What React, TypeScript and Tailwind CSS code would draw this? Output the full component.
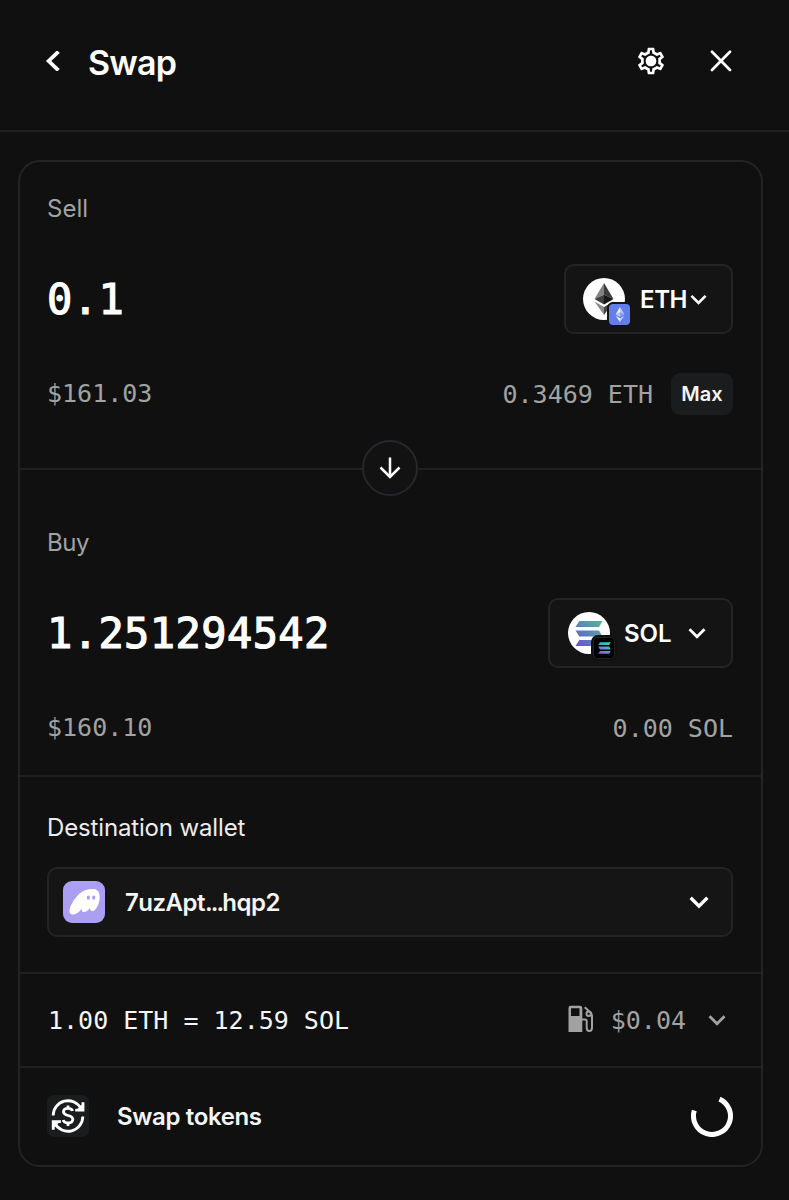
import type { ReactNode } from "react";
import { MdOutlineSettings } from "react-icons/md";

function Chevron({ className = "", dir = "down", weight = 2.8 }: { className?: string; dir?: "down" | "left"; weight?: number }) {
  return (
    <svg className={className} viewBox="0 0 18 18" fill="none" stroke="currentColor" strokeWidth={weight}>
      <path d={dir === "down" ? "M1.5 5.2 9 12.7 16.5 5.2" : "M13 0.5 4.2 9 13 17.5"} />
    </svg>
  );
}

function EthDiamond({ className, mono = false }: { className: string; mono?: boolean }) {
  const c = mono
    ? ["#eef0ff", "#c3cbfa", "#b9c3f8", "#8d9df2", "#eef0ff", "#c3cbfa"]
    : ["#828282", "#3c3c3b", "#3f3f3f", "#151515", "#8a8a8a", "#454545"];
  return (
    <svg className={className} viewBox="0 0 20 32">
      <path d="M10 0 0.5 16 10 11.8Z" fill={c[0]} />
      <path d="M10 0 19.5 16 10 11.8Z" fill={c[1]} />
      <path d="M0.5 16 10 11.8V21.5Z" fill={c[2]} />
      <path d="M19.5 16 10 11.8V21.5Z" fill={c[3]} />
      <path d="M0.5 18.4 10 24V32Z" fill={c[4]} />
      <path d="M19.5 18.4 10 24V32Z" fill={c[5]} />
    </svg>
  );
}

function SolBars({ className, id, from, to }: { className: string; id: string; from: string; to: string }) {
  return (
    <svg className={className} viewBox="0 0 28 25">
      <defs>
        <linearGradient id={id} x1="26" y1="0" x2="3" y2="26" gradientUnits="userSpaceOnUse">
          <stop offset="0" stopColor={from} />
          <stop offset="1" stopColor={to} />
        </linearGradient>
      </defs>
      <g fill={`url(#${id})`}>
        <path d="M4.3 0H27.5L24 6H0.5Z" />
        <path d="M0.5 9.5H24L27.5 15.5H4.3Z" />
        <path d="M4.3 19H27.5L24 25H0.5Z" />
      </g>
    </svg>
  );
}

function Row({ children, className }: { children: ReactNode; className: string }) {
  return <div className={`flex items-center justify-between ${className}`}>{children}</div>;
}

const mono = "font-['DejaVu_Sans_Mono',monospace] whitespace-pre";
const small = "text-[25px] leading-[36px]";
const big = "pt-[2px] text-[42px] leading-[60px] tracking-[0.42px] text-white [-webkit-text-stroke:1.2px_#fff]";

export default function App() {
  return (
    <div className="flex h-[1200px] w-[789px] flex-col bg-[#101010] font-['Inter',sans-serif] text-[#f5f5f5]">
      <header className="flex h-[132px] shrink-0 items-start border-b-2 border-[#202021] pl-[44px] pr-[56px] pt-[38px]">
        <Chevron dir="left" weight={3.4} className="mt-[13px] h-[20px] w-[20px] text-white" />
        <h1 className="ml-[24px] mt-px text-[34px] leading-[48px] font-semibold tracking-[-0.8px] text-white">Swap</h1>
        <div className="relative ml-auto mt-[7px] h-[32px] w-[32px]">
          <MdOutlineSettings className="h-[32px] w-[32px] text-white" />
          <span className="absolute left-[11px] top-[11px] h-[10px] w-[10px] rounded-full bg-white" />
        </div>
        <svg className="ml-[41px] mt-[12px] h-[22px] w-[25px]" viewBox="0 0 25 22" fill="none" stroke="#fff" strokeWidth="2.7" strokeLinecap="round">
          <path d="M4 1.8 22 20M22 1.8 4 20" />
        </svg>
      </header>

      <main className="ml-[18px] mt-[28px] flex h-[1007px] w-[745px] flex-col rounded-[22px] border-2 border-[#242426]">
        <section className="relative h-[308px] border-b-2 border-[#202021] pl-[27px] pr-[28px] pt-[29px]">
          <div className="text-[24px] leading-[36px] text-[#a2a2a2]">Sell</div>
          <Row className="mt-[37px] h-[70px]">
            <span className={`${mono} ${big}`}>0.1</span>
            <div className="flex h-[70px] w-[169px] items-center rounded-[10px] border-2 border-[#242425] bg-[#141414] pl-[17px]">
              <div className="relative flex h-[42px] w-[42px] items-center justify-center rounded-full bg-white">
                <EthDiamond className="h-[32px] w-[20px]" />
                <span className="absolute left-[24px] top-[24px] flex h-[25px] w-[25px] items-center justify-center rounded-[6px] border-2 border-[#141414] bg-[#627eea]">
                  <EthDiamond mono className="h-[15px] w-[10px]" />
                </span>
              </div>
              <span className="ml-[15px] pt-px text-[24px] font-semibold tracking-[-0.4px] text-white">ETH</span>
              <Chevron className="ml-[3px] h-[17px] w-[17px] text-white" />
            </div>
          </Row>
          <Row className="mt-[39px] h-[42px] text-[#a2a2a2]">
            <span className={`${mono} ${small} pb-px`}>$161.03</span>
            <div className="flex items-center">
              <span className={`${mono} ${small} pt-[2px]`}>0.3469 ETH</span>
              <span className="ml-[18px] flex h-[42px] w-[62px] items-center justify-center rounded-[9px] bg-[#1b1c1e] text-[20px] font-semibold text-[#f5f5f5]">Max</span>
            </div>
          </Row>
          <div className="absolute -bottom-[28px] left-[342px] flex h-[56px] w-[56px] items-center justify-center rounded-full border-2 border-[#27262b] bg-[#121213]">
            <svg className="h-[22px] w-[22px]" viewBox="0 0 22 22" fill="none" stroke="#fff" strokeWidth="2.5">
              <path d="M11 0.5V20M1.5 10.5 11 20 20.500 10.5" />
            </svg>
          </div>
        </section>

        <section className="h-[307px] border-b-2 border-[#202021] pl-[27px] pr-[28px] pt-[55px]">
          <div className="text-[24px] leading-[36px] tracking-[-0.5px] text-[#a2a2a2]">Buy</div>
          <Row className="mt-[37px] h-[70px]">
            <span className={`${mono} ${big}`}>1.251294542</span>
            <div className="flex h-[70px] w-[185px] items-center rounded-[10px] border-2 border-[#242425] bg-[#141414] pl-[18px]">
              <div className="relative flex h-[42px] w-[42px] items-center justify-center rounded-full bg-white">
                <SolBars id="sol-token" from="#4fb795" to="#6b50d8" className="h-[25px] w-[28px]" />
                <span className="absolute left-[23px] top-[23px] flex h-[26px] w-[26px] items-center justify-center rounded-[7px] bg-[#111]">
                  <span className="flex h-[22px] w-[22px] items-center justify-center rounded-[4px] border border-[#222] bg-black">
                    <SolBars id="sol-chain" from="#19f0a0" to="#9945ff" className="h-[12px] w-[13px]" />
                  </span>
                </span>
              </div>
              <span className="ml-[14px] pt-px text-[24px] font-semibold text-white">SOL</span>
              <Chevron className="ml-[16px] h-[18px] w-[18px] text-white" />
            </div>
          </Row>
          <Row className="mt-[39px] h-[42px] text-[#a2a2a2]">
            <span className={`${mono} ${small} pb-px`}>$160.10</span>
            <span className={`${mono} ${small} pt-[2px]`}>0.00 SOL</span>
          </Row>
        </section>

        <section className="h-[197px] border-b-2 border-[#202021] pl-[27px] pr-[28px] pt-[33px]">
          <div className="text-[24px] leading-[36px] tracking-[-0.15px] text-[#ececec]">Destination wallet</div>
          <div className="mt-[21px] flex h-[70px] items-center rounded-[10px] border-2 border-[#242425] bg-[#151515] pl-[14px] pr-[22px]">
            <svg className="h-[42px] w-[42px] rounded-[9px] bg-[#ab9ff2]" viewBox="0 0 42 42">
              <path fill="#fff" d="M6.5 31C6 26 11 18 16 13 20 9 26 7.500 31 8 35 8.500 37 12 36.700 17 36.500 23 32.500 30 30 30 28 30.500 27 29 26.800 27 25 29.500 23 31 21 31 19 31.200 18.500 29 18.500 27.500 16.500 31 13 33.500 10 33.500 8 33.500 6.700 32.500 6.500 31Z" />
              <ellipse cx="25.300" cy="16.700" rx="1.600" ry="2.100" fill="#ab9ff2" />
              <ellipse cx="30.700" cy="16.700" rx="1.600" ry="2.100" fill="#ab9ff2" />
            </svg>
            <span className="ml-[20px] pt-px text-[24px] font-semibold tracking-[-0.5px]">
              7uzApt<span className="tracking-[-1.900px]">...</span>hqp2
            </span>
            <Chevron weight={3} className="ml-auto h-[20px] w-[20px] text-white" />
          </div>
        </section>

        <section className="flex h-[94px] items-center border-b-2 border-[#202021] pl-[28px] pr-[28px]">
          <span className={`${mono} ${small} pt-[2px]`}>1.00 ETH = 12.59 SOL</span>
          <svg className="ml-auto h-[28px] w-[26px] -translate-y-px" viewBox="0 0 26 28" fill="none" stroke="#a2a2a2" strokeWidth="2">
            <path fill="#a2a2a2" stroke="none" fillRule="evenodd" d="M2.500 0.700H12Q14.300 0.700 14.300 3V27H0.500V3Q0.500 0.700 2.500 0.700ZM3 3.300V11H11.500V3.300Z" />
            <path d="M16.700 2.300 22.500 7.500Q24 9 24 11V22.500Q24 26 21.300 26 18.700 26 18.700 22.500V16Q18.700 14.500 17 14.500H14" />
            <circle cx="20.700" cy="8.700" r="2.200" />
          </svg>
          <span className={`${mono} ${small} ml-[17px] pt-[2px] text-[#a2a2a2]`}>$0.04</span>
          <Chevron className="ml-[22px] mr-[7px] h-[18px] w-[18px] text-[#a2a2a2]" />
        </section>

        <section className="flex flex-1 items-center pl-[27px] pr-[28px]">
          <svg className="h-[42px] w-[42px] -translate-y-px rounded-[7px] bg-[#1b1c1e]" viewBox="0 0 42 42" fill="none" stroke="#fff" strokeWidth="2.800">
            <path d="M6.200 20.500A14.800 14.800 0 0 1 34 13.500M35.800 21.500A14.800 14.800 0 0 1 8 28.500" />
            <path fill="#fff" stroke="none" d="M37.400 7.200V16.500H28.200V14L31 13.500 34.500 9.800V7.200ZM4.800 34.800V25.300H14V27.800L11.200 28.300 7.700 32.200V34.800Z" />
            <path d="M25.500 16C25 14 23 13.300 21 13.300 18.300 13.300 16.500 14.700 16.500 16.800 16.500 22 25.800 19 25.800 24.300 25.800 26.700 23.700 28 21 28 18.500 28 16.700 27 16.200 25M21 10.500V13.300M21 28V31" />
          </svg>
          <span className="ml-[28px] pt-px text-[24px] font-semibold tracking-[-0.350px]">Swap tokens</span>
          <svg className="ml-auto h-[42px] w-[42px] -translate-y-px" viewBox="0 0 42 42" fill="none" stroke="#fff" strokeWidth="5">
            <path d="M28.500 4.100A18.500 18.500 0 1 1 3.300 15.600" />
          </svg>
        </section>
      </main>
    </div>
  );
}
